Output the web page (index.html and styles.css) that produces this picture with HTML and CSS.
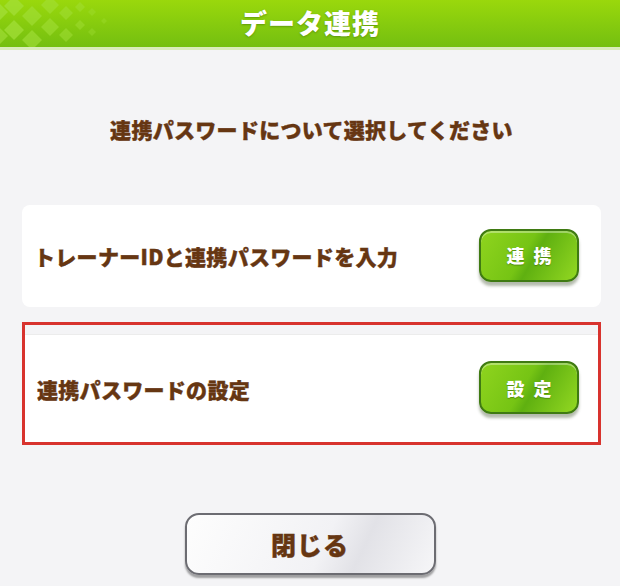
FILE: index.html
```html
<!DOCTYPE html>
<html lang="ja">
<head>
  <meta charset="UTF-8" />
  <meta name="viewport" content="width=device-width, initial-scale=1.0"/>
  <title>データ連携</title>
  <link rel="stylesheet" href="styles.css">
</head>
<body>
  <div class="header">
    <svg class="pattern" width="130" height="47" viewBox="0 0 130 47">
      <g fill="#a4e03a">
        <path d="M0 4 L8 12 L0 20 Z" opacity="0.7"/>
        <path d="M14 -4 L24 6 L14 16 L4 6 Z" opacity="0.7"/>
        <path d="M14 20 L24 30 L14 40 L4 30 Z" opacity="0.7"/>
        <path d="M0 28 L8 36 L0 44 Z" opacity="0.6"/>
        <path d="M32 6 L42 16 L32 26 L22 16 Z" opacity="0.6"/>
        <path d="M32 30 L42 40 L32 50 L22 40 Z" opacity="0.6"/>
        <path d="M50 -4 L59 5 L50 14 L41 5 Z" opacity="0.55"/>
        <path d="M50 18 L59 27 L50 36 L41 27 Z" opacity="0.55"/>
        <path d="M66 6 L73 13 L66 20 L59 13 Z" opacity="0.5"/>
        <path d="M66 28 L73 35 L66 42 L59 35 Z" opacity="0.5"/>
        <path d="M80 2 L85 7 L80 12 L75 7 Z" opacity="0.45"/>
        <path d="M80 20 L85 25 L80 30 L75 25 Z" opacity="0.45"/>
        <path d="M92 8 L96 12 L92 16 L88 12 Z" opacity="0.35"/>
        <path d="M92 28 L96 32 L92 36 L88 32 Z" opacity="0.35"/>
        <path d="M104 18 L107 21 L104 24 L101 21 Z" opacity="0.3"/>
      </g>
    </svg>
    <h1>データ連携</h1>
  </div>

  <div class="content">
    <p class="lead">連携パスワードについて選択してください</p>

    <div class="card">
      <span class="label">トレーナーIDと連携パスワードを入力</span>
      <button class="green-btn">連携</button>
    </div>

    <div class="highlight">
      <div class="card card-inner">
        <span class="label">連携パスワードの設定</span>
        <button class="green-btn">設定</button>
      </div>
    </div>

    <button class="close-btn">閉じる</button>
  </div>
</body>
</html>
```

FILE: styles.css
```css
* {
  box-sizing: border-box;
  font-family: "Noto Sans CJK JP", "Noto Sans", sans-serif;
}
body {
  margin: 0;
  padding: 0;
  width: 620px;
  height: 586px;
  overflow: hidden;
  background: #f4f4f6;
}
.header {
  position: relative;
  height: 50px;
  background: linear-gradient(#9ad80c, #74bf10);
  border-bottom: 3px solid #d9ecbb;
  display: flex;
  align-items: center;
  justify-content: center;
}
.pattern { position: absolute; left: 0; top: 0; }
.header h1 {
  margin: 0;
  margin-top: -2px;
  color: #fff;
  font-size: 27px;
  font-weight: 900;
  letter-spacing: 1px;
  text-shadow: 0 1px 2px rgba(60, 110, 0, 0.5);
}
.content {
  display: flex;
  flex-direction: column;
  align-items: center;
  padding: 0 19px 0 22px;
}
.lead {
  margin: 64px 0 0;
  height: 30px;
  line-height: 30px;
  color: #663612;
  font-size: 21px;
  font-weight: 900;
  letter-spacing: 0.3px;
  -webkit-text-stroke: 0.4px #663612;
}
.card {
  width: 100%;
  height: 102px;
  margin-top: 61px;
  background: #fff;
  border-radius: 8px;
  display: flex;
  align-items: center;
  justify-content: space-between;
  padding: 0 22px 0 12px;
}
.label {
  color: #663612;
  font-size: 21px;
  font-weight: 900;
  letter-spacing: 0.3px;
  -webkit-text-stroke: 0.4px #663612;
}
.green-btn {
  width: 100px;
  height: 53px;
  margin-top: -2px;
  border: 2px solid #3f7a12;
  border-radius: 12px;
  background: linear-gradient(120deg, #8fd41e 0%, #76c414 45%, #5fb010 55%, #93d822 100%);
  box-shadow: 0 4px 3px rgba(40, 60, 20, 0.35), inset 0 2px 0 rgba(255,255,255,0.35);
  color: #fff;
  font-size: 18px;
  font-weight: 900;
  letter-spacing: 9px;
  padding: 0 0 0 9px;
  text-shadow: 0 1px 1px rgba(50, 90, 0, 0.5);
  cursor: pointer;
}
.highlight {
  width: 100%;
  height: 123px;
  margin-top: 15px;
  border: 3px solid #d8332e;
  padding-top: 9px;
}
.card-inner {
  margin-top: 0;
  height: 108px;
  border-radius: 0;
  padding-right: 19px;
  border-top: 1px solid #ececec;
}
.close-btn {
  width: 251px;
  height: 62px;
  margin-top: 68px;
  margin-left: -3px;
  border: 2px solid #6c6c72;
  border-radius: 14px;
  background: linear-gradient(115deg, #fdfdfd 0%, #f2f2f5 55%, #e2e2e7 70%, #f6f6f8 100%);
  box-shadow: 0 3px 2px rgba(0, 0, 0, 0.35);
  color: #663612;
  font-size: 25px;
  font-weight: 900;
  letter-spacing: 1px;
  -webkit-text-stroke: 0.4px #663612;
  cursor: pointer;
}
```
